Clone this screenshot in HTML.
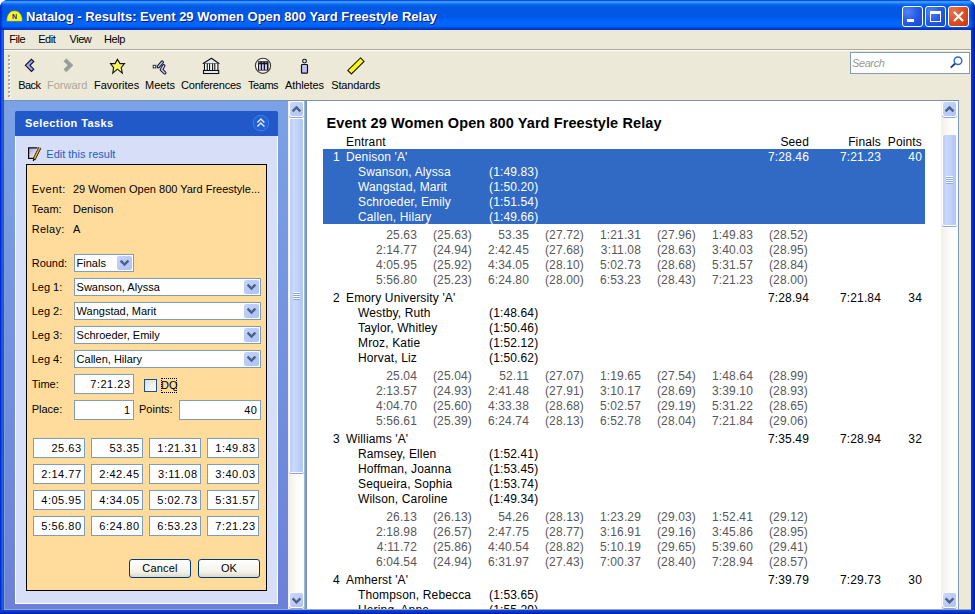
<!DOCTYPE html>
<html>
<head>
<meta charset="utf-8">
<title>Natalog - Results: Event 29 Women Open 800 Yard Freestyle Relay</title>
<style>
html,body{margin:0;padding:0;}
body{width:975px;height:614px;overflow:hidden;background:#fff;font-family:"Liberation Sans",sans-serif;font-size:11px;color:#000;position:relative;}
*{box-sizing:border-box;}
.abs{position:absolute;}
#win{position:absolute;left:0;top:0;width:975px;height:614px;background:linear-gradient(to right,#0019cf 0,#0831d9 1px,#166aee 2px,#0855dd 4px,#0855dd 5px,#0831d9 6px,#0831d9 970px,#0a3fde 971px,#0831d9 972px,#001ea0 975px);border-radius:8px 8px 0 0;overflow:hidden;}
#title{position:absolute;left:0;top:0;width:975px;height:30px;
background:linear-gradient(to bottom,#0543dc 0px,#0a50e4 0.6px,#3a93ff 1.2px,#3d96ff 2.4px,#1c80fb 3.4px,#0a6cf0 4.4px,#035ce4 6px,#0058e3 8px,#0058e6 17px,#0061f6 20px,#0068fd 23px,#0064f9 26px,#0058ea 27.2px,#0040cc 28.2px,#0036c0 29px,#0036c0 30px);}
#title .txt{position:absolute;left:26px;top:9px;font-weight:bold;font-size:13px;color:#fff;white-space:nowrap;text-shadow:1px 1px 0 #0a1883;}
#client{position:absolute;left:4px;top:30px;width:967px;height:580px;background:#ece9d8;border-bottom:1px solid #9aa6b4;}
#bb{position:absolute;left:0;top:610px;width:975px;height:4px;background:linear-gradient(to bottom,#0a48e2 0%,#0838d6 40%,#0428bc 75%,#001c9c 100%);}
.wb{position:absolute;top:6px;width:21px;height:21px;border:1px solid #fff;border-radius:3px;background:radial-gradient(circle at 25% 25%,#5286f6 0%,#2a5ee8 45%,#2152dc 70%,#1a44cc 100%);}
.wb.close{background:radial-gradient(circle at 25% 25%,#ea7450 0%,#de4e24 50%,#c4360c 100%);}
#menubar{position:absolute;left:0;top:0;width:967px;height:19px;}
#menubar span{position:absolute;top:3px;letter-spacing:-0.45px;font-size:11px;line-height:13px;white-space:nowrap;}
#toolbar{position:absolute;left:0;top:19px;width:967px;height:51px;border-top:1px solid #aca899;box-shadow:inset 0 1px 0 #fff;}
.tb{position:absolute;top:29px;font-size:11px;line-height:13px;white-space:nowrap;}
.ti{position:absolute;}
#search{position:absolute;left:846px;top:2px;width:120px;height:22px;background:#fff;border:1px solid #7f9db9;}
#search span{position:absolute;left:1px;top:4px;font-style:italic;color:#9a9a8a;font-size:11px;letter-spacing:-0.4px;}
/* left pane */
#left{position:absolute;left:0;top:70px;width:284px;height:509px;background:linear-gradient(to bottom,#7ba2e7 0%,#6b80da 100%);border-left:1px solid #8a9cc0;box-shadow:inset 0 1px 0 #8fa3c8;}
#lhead{position:absolute;left:10px;top:11px;width:263px;height:25px;background:#2259c8;border-radius:2px 2px 0 0;}
#lhead .t{position:absolute;left:10px;top:6px;color:#fff;font-weight:bold;font-size:11px;line-height:13px;letter-spacing:0.42px;white-space:nowrap;}
#lbody{position:absolute;left:10px;top:36px;width:263px;height:468px;background:#d6dff7;border:1px solid #fff;border-top:none;}
#obox{position:absolute;left:21px;top:64px;width:241px;height:427px;background:#ffdc9c;border:1px solid #000;}
.lb{position:absolute;font-size:11px;line-height:13px;white-space:nowrap;}
.inp{position:absolute;background:#fff;border:1px solid #7f9db9;font-size:11px;line-height:13px;white-space:nowrap;overflow:hidden;}
.inp span{position:absolute;top:3px;}
.inp .r{right:2.5px;letter-spacing:0.5px;}
.inp .l{left:1.6px;top:2px;}
.dd{position:absolute;right:1px;top:1px;width:15px;bottom:1px;border-radius:2px;background:linear-gradient(135deg,#c6d4fb 0%,#b7c9f8 55%,#aec2f6 100%);}
.btn{position:absolute;height:19px;border:1px solid #003c74;border-radius:3px;background:linear-gradient(to bottom,#ffffff 0%,#f3f2ea 70%,#dcd8c8 100%);font-size:11px;line-height:13px;text-align:center;padding-top:2px;}
/* scrollbars */
.sb{position:absolute;width:17px;background:linear-gradient(to right,#f1efe7 0%,#fdfdfb 60%,#fefefc 100%);}
.sbtn{position:absolute;left:1px;width:15px;height:16px;border:1px solid #fff;border-radius:3px;background:linear-gradient(135deg,#cbd8fb 0%,#b9caf7 60%,#aec3f5 100%);box-shadow:0 1px 0 #8aa6e0;}
.sbtn svg{position:absolute;left:0;top:0;}
.thumb{position:absolute;left:1px;width:15px;border:1px solid #fff;border-left-width:1px;border-radius:2px;background:linear-gradient(to right,#b9cbf7 0%,#c9d8fb 25%,#c3d3fa 55%,#b2c9f8 85%,#b7c8f4 100%);box-shadow:0 1px 0 #8aa6e0;}
.grip{position:absolute;left:3px;width:7px;height:8px;background:repeating-linear-gradient(to bottom,#fff 0,#fff 1px,#8aa8ee 1px,#8aa8ee 2px);}
/* right pane */
#right{position:absolute;left:303px;top:70px;width:634px;height:509px;background:#fff;overflow:hidden;border-top:1px solid #7f9db9;}
#rtitle{position:absolute;left:19.5px;top:14px;font-weight:bold;font-size:14.5px;letter-spacing:0.1px;white-space:nowrap;}
.row{position:absolute;left:0;height:15px;font-size:12px;line-height:15px;white-space:nowrap;letter-spacing:0.14px;}
.row span{position:absolute;top:0;}
.g{color:#585858;}
.sel{position:absolute;left:16px;width:602px;background:#316ac5;}
.w{color:#fff;}
</style>
</head>
<body>
<div id="win">
 <div id="title">
  <svg class="abs" style="left:6px;top:10px" width="17" height="12" viewBox="0 0 17 12"><path d="M1 11 C1 4 4.5 1 8.5 1 C12.5 1 16 4 16 11 Z" fill="#ffff00" stroke="#d8c020" stroke-width="0.6"/><text x="8.5" y="9" font-family="Liberation Sans, sans-serif" font-size="7" font-weight="bold" fill="#1010e0" text-anchor="middle">N</text></svg>
  <div class="abs" style="left:0;top:0;width:3px;height:30px;background:linear-gradient(to right,rgba(0,20,170,.75),rgba(0,20,170,0))"></div><div class="abs" style="right:0;top:0;width:5px;height:30px;background:linear-gradient(to left,rgba(0,20,150,.8),rgba(0,20,150,0))"></div>
  <div class="txt">Natalog - Results: Event 29 Women Open 800 Yard Freestyle Relay</div>
  <div class="wb" style="left:902px"><div class="abs" style="left:4px;top:12px;width:7px;height:3px;background:#fff"></div></div>
  <div class="wb" style="left:925px"><div class="abs" style="left:4px;top:4px;width:11px;height:11px;border:1px solid #fff;border-top-width:3px"></div></div>
  <div class="wb close" style="left:948px"><svg class="abs" style="left:0;top:0" width="19" height="19" viewBox="0 0 19 19"><path d="M5 5 L14 14 M14 5 L5 14" stroke="#fff" stroke-width="2.2" fill="none"/></svg></div>
 </div>
 <div id="bb"></div>
 <div id="client">
  <div id="menubar">
   <span style="left:5.2px">File</span><span style="left:34.2px">Edit</span><span style="left:65.5px">View</span><span style="left:100px">Help</span>
  </div>
  <div id="toolbar">
   
<div class="abs" style="left:5px;top:6px;width:2px;height:42px;background:repeating-linear-gradient(to bottom,#fff 0,#fff 2px,transparent 2px,transparent 4px)"></div><div class="abs" style="left:4px;top:5px;width:2px;height:42px;background:repeating-linear-gradient(to bottom,#aeab98 0,#aeab98 2px,transparent 2px,transparent 4px)"></div>
<svg class="ti" style="left:20px;top:8px" width="12" height="15" viewBox="0 0 12 15"><path transform="translate(5.5 7.3) scale(0.94) translate(-5.5 -7.3)" d="M1 7.3 L7.6 0.9 L10.1 3.2 L6 7.3 L10.1 11.4 L7.6 13.8 Z" fill="#a0a0ec" stroke="#101018" stroke-width="1.1" stroke-linejoin="miter"/></svg>
<svg class="ti" style="left:58px;top:8px" width="12" height="15" viewBox="0 0 12 15"><path d="M11 7.3 L4.4 0.9 L1.9 3.2 L6 7.3 L1.9 11.4 L4.4 13.8 Z" fill="#9a9a9a" stroke="#a4a4a0" stroke-width="0.8" stroke-linejoin="miter"/></svg>
<svg class="ti" style="left:104px;top:8px" width="19" height="18" viewBox="0 0 19 18"><path transform="translate(9.4 8.3) scale(0.93) translate(-9.4 -8.3)" d="M9.4 0.9 L12.2 5.4 L17 5.4 L13.5 9.7 L14.7 15.7 L9.4 11.4 L4.4 15.7 L5.3 9.7 L2 5.4 L6.9 5.4 Z" fill="#f8f860" stroke="#14140a" stroke-width="1.2" stroke-linejoin="miter"/></svg>
<svg class="ti" style="left:148px;top:10px" width="16" height="15" viewBox="0 0 16 15"><rect x="1.2" y="5.3" width="2.6" height="2.6" fill="#fff" stroke="#2a2a44" stroke-width="1"/><path d="M6.4 6.6 L10.2 2.2" stroke="#1a1a30" stroke-width="3.5" stroke-linecap="round" fill="none"/><path d="M6.4 6.6 L10.2 2.2" stroke="#c4c4f4" stroke-width="1.4" stroke-linecap="round" fill="none"/><path d="M11.6 5.8 L9.5 9.8 L12.7 12.7" stroke="#1a1a30" stroke-width="3.5" stroke-linecap="round" stroke-linejoin="round" fill="none"/><path d="M11.6 5.8 L9.5 9.8 L12.7 12.7" stroke="#c8c8f6" stroke-width="1.5" stroke-linecap="round" stroke-linejoin="round" fill="none"/></svg>
<svg class="ti" style="left:198px;top:7px" width="19" height="18" viewBox="0 0 19 18"><path d="M9.4 1.2 L17 6.5 L1.2 6.5 Z" fill="#e8e8f4" stroke="#101010" stroke-width="1.1" stroke-linejoin="round"/><rect x="2.2" y="6.5" width="14" height="7" fill="#fafafa" stroke="none"/><path d="M2.5 6.5 V13.5 M5.3 6.5 V13.5 M7.6 6.5 V13.5 M10.6 6.5 V13.5 M12.8 6.5 V13.5 M15.9 6.5 V13.5" stroke="#101010" stroke-width="1.1"/><rect x="1.5" y="13.5" width="15.2" height="3" fill="#f0f0f8" stroke="#101010" stroke-width="1.1"/></svg>
<svg class="ti" style="left:250px;top:7px" width="18" height="18" viewBox="0 0 18 18"><circle cx="9" cy="8.8" r="7.6" fill="#f6f4ec" stroke="#3c3838" stroke-width="1.1"/><rect x="4" y="4.2" width="10.5" height="9.4" fill="#18181c"/><path d="M4.6 5.3 H14" stroke="#8c8ca0" stroke-width="1" stroke-dasharray="1.6 1.6"/><rect x="5" y="7.3" width="1.8" height="5.5" fill="#c8c8f8"/><rect x="8" y="7.3" width="1.8" height="5.5" fill="#c8c8f8"/><rect x="11" y="7.3" width="2" height="5.5" fill="#c8c8f8"/></svg>
<svg class="ti" style="left:296px;top:8px" width="9" height="16" viewBox="0 0 9 16"><circle cx="4.5" cy="3.1" r="1.9" fill="#e4e4fa" stroke="#101010" stroke-width="1.1"/><rect x="1.5" y="6.5" width="6" height="8.7" rx="0.8" fill="#c0c0f0" stroke="#101010" stroke-width="1.2"/></svg>
<svg class="ti" style="left:343px;top:7px" width="18" height="18" viewBox="0 0 18 18"><path d="M13.5 0.9 L17 4.4 L4.4 16.9 L0.8 13.4 Z" fill="#ffff10" stroke="#181808" stroke-width="1.1" stroke-linejoin="miter"/><path d="M5 11.5 L13 3.6" stroke="#b8a830" stroke-width="0.7" stroke-dasharray="1 1.4"/></svg>
<div class="tb" style="left:14.2px;letter-spacing:-0.55px">Back</div>
<div class="tb" style="left:43px;color:#aca899">Forward</div>
<div class="tb" style="left:90px">Favorites</div>
<div class="tb" style="left:141px">Meets</div>
<div class="tb" style="left:177px;letter-spacing:-0.2px">Conferences</div>
<div class="tb" style="left:244px;letter-spacing:-0.45px">Teams</div>
<div class="tb" style="left:281px;letter-spacing:-0.1px">Athletes</div>
<div class="tb" style="left:327.2px;letter-spacing:-0.12px">Standards</div>

   <div id="search"><span>Search</span>
    <svg class="abs" style="left:97px;top:2px" width="16" height="16" viewBox="0 0 16 16"><path d="M7.4 8.3 L2.8 12.6" stroke="#1c3c88" stroke-width="1.9" stroke-linecap="butt"/><circle cx="10" cy="5.7" r="3.8" fill="#fff" stroke="#2f6fc4" stroke-width="1.5"/></svg>
   </div>
  </div>
  <div id="left">
   <div id="lhead"><div class="t">Selection Tasks</div>
    <svg class="abs" style="right:9px;top:4px" width="17" height="17" viewBox="0 0 17 17"><circle cx="8.9" cy="8.1" r="7.8" fill="#2560d2" stroke="#3a80f2" stroke-width="1"/><path d="M5.4 7.6 L8.9 4.1 L12.4 7.6 M5.4 11.6 L8.9 8.1 L12.4 11.6" stroke="#e4ecff" stroke-width="1.4" fill="none"/></svg>
   </div>
   <div id="lbody"></div>
   <div id="obox"></div>
<svg class="abs" style="left:23px;top:46px" width="15" height="16" viewBox="0 0 15 16"><defs><linearGradient id="pg" x1="0" y1="0" x2="0.7" y2="1"><stop offset="0" stop-color="#a4a4d4"/><stop offset="1" stop-color="#f4f4fc"/></linearGradient></defs><path d="M0.6 1.9 H9 L6 12.4 H0.6 Z" fill="url(#pg)"/><path d="M9.4 1.9 H0.6 V12.4 H6" fill="none" stroke="#0a0a0a" stroke-width="1.2"/><path d="M11.9 1.6 L5.9 13.6" stroke="#141008" stroke-width="3.2"/><path d="M11.6 2.2 L6.4 12.6" stroke="#e8d828" stroke-width="1.5"/><path d="M11.3 2.8 L6.8 11.8" stroke="#e03050" stroke-width="0.9" stroke-dasharray="1.2 1.2"/><path d="M12.2 1 L11.5 2.4" stroke="#f0a0b0" stroke-width="1.6"/><path d="M6.2 13 L5.2 15" stroke="#141008" stroke-width="1.4"/></svg>
<div class="lb" style="left:41.3px;top:48px;color:#215dc6">Edit this result</div>
<div class="lb" style="left:26.7px;top:83px;letter-spacing:0.5px">Event:</div>
<div class="lb" style="left:68px;top:83px;">29 Women Open 800 Yard Freestyle...</div>
<div class="lb" style="left:26.7px;top:103px;">Team:</div>
<div class="lb" style="left:68px;top:103px;">Denison</div>
<div class="lb" style="left:26.7px;top:123px;letter-spacing:0.3px">Relay:</div>
<div class="lb" style="left:68px;top:123px;">A</div>
<div class="lb" style="left:26.7px;top:157px;">Round:</div>
<div class="inp" style="left:69px;top:154px;width:60px;height:18px"><span class="l">Finals</span><div class="dd"><svg width="15" height="14" viewBox="0 0 15 14" style="position:absolute;left:0;top:0"><path d="M3.6 4.6 L7.5 8.5 L11.4 4.6" stroke="#4d6185" stroke-width="2.4" fill="none"/></svg></div></div>
<div class="lb" style="left:26.7px;top:181px;">Leg 1:</div>
<div class="inp" style="left:69px;top:178px;width:187px;height:18px"><span class="l">Swanson, Alyssa</span><div class="dd"><svg width="15" height="14" viewBox="0 0 15 14" style="position:absolute;left:0;top:0"><path d="M3.6 4.6 L7.5 8.5 L11.4 4.6" stroke="#4d6185" stroke-width="2.4" fill="none"/></svg></div></div>
<div class="lb" style="left:26.7px;top:205px;">Leg 2:</div>
<div class="inp" style="left:69px;top:202px;width:187px;height:18px"><span class="l">Wangstad, Marit</span><div class="dd"><svg width="15" height="14" viewBox="0 0 15 14" style="position:absolute;left:0;top:0"><path d="M3.6 4.6 L7.5 8.5 L11.4 4.6" stroke="#4d6185" stroke-width="2.4" fill="none"/></svg></div></div>
<div class="lb" style="left:26.7px;top:229px;">Leg 3:</div>
<div class="inp" style="left:69px;top:226px;width:187px;height:18px"><span class="l">Schroeder, Emily</span><div class="dd"><svg width="15" height="14" viewBox="0 0 15 14" style="position:absolute;left:0;top:0"><path d="M3.6 4.6 L7.5 8.5 L11.4 4.6" stroke="#4d6185" stroke-width="2.4" fill="none"/></svg></div></div>
<div class="lb" style="left:26.7px;top:253px;">Leg 4:</div>
<div class="inp" style="left:69px;top:250px;width:187px;height:18px"><span class="l">Callen, Hilary</span><div class="dd"><svg width="15" height="14" viewBox="0 0 15 14" style="position:absolute;left:0;top:0"><path d="M3.6 4.6 L7.5 8.5 L11.4 4.6" stroke="#4d6185" stroke-width="2.4" fill="none"/></svg></div></div>
<div class="lb" style="left:26.7px;top:278px;">Time:</div>
<div class="inp" style="left:69px;top:274px;width:60px;height:20px"><span class="r">7:21.23</span></div>
<div class="abs" style="left:139px;top:279px;width:13px;height:13px;border:1px solid #1c5180;background:linear-gradient(135deg,#dcdcd7 0%,#ffffff 100%)"></div>
<div class="abs" style="left:155.5px;top:278px;width:16px;height:15px;border:1px dotted #000"></div>
<div class="lb" style="left:156px;top:279px;">DQ</div>
<div class="lb" style="left:26.7px;top:303px;">Place:</div>
<div class="inp" style="left:69px;top:300px;width:60px;height:20px"><span class="r">1</span></div>
<div class="lb" style="left:134px;top:303px;">Points:</div>
<div class="inp" style="left:174px;top:300px;width:82px;height:20px"><span class="r">40</span></div>
<div class="inp" style="left:28px;top:338px;width:52px;height:20px"><span class="r">25.63</span></div>
<div class="inp" style="left:86px;top:338px;width:52px;height:20px"><span class="r">53.35</span></div>
<div class="inp" style="left:144px;top:338px;width:52px;height:20px"><span class="r">1:21.31</span></div>
<div class="inp" style="left:202px;top:338px;width:52px;height:20px"><span class="r">1:49.83</span></div>
<div class="inp" style="left:28px;top:364px;width:52px;height:20px"><span class="r">2:14.77</span></div>
<div class="inp" style="left:86px;top:364px;width:52px;height:20px"><span class="r">2:42.45</span></div>
<div class="inp" style="left:144px;top:364px;width:52px;height:20px"><span class="r">3:11.08</span></div>
<div class="inp" style="left:202px;top:364px;width:52px;height:20px"><span class="r">3:40.03</span></div>
<div class="inp" style="left:28px;top:390px;width:52px;height:20px"><span class="r">4:05.95</span></div>
<div class="inp" style="left:86px;top:390px;width:52px;height:20px"><span class="r">4:34.05</span></div>
<div class="inp" style="left:144px;top:390px;width:52px;height:20px"><span class="r">5:02.73</span></div>
<div class="inp" style="left:202px;top:390px;width:52px;height:20px"><span class="r">5:31.57</span></div>
<div class="inp" style="left:28px;top:416px;width:52px;height:20px"><span class="r">5:56.80</span></div>
<div class="inp" style="left:86px;top:416px;width:52px;height:20px"><span class="r">6:24.80</span></div>
<div class="inp" style="left:144px;top:416px;width:52px;height:20px"><span class="r">6:53.23</span></div>
<div class="inp" style="left:202px;top:416px;width:52px;height:20px"><span class="r">7:21.23</span></div>
<div class="btn" style="left:124px;top:459px;width:62px;letter-spacing:0.2px">Cancel</div>
<div class="btn" style="left:193px;top:459px;width:62px">OK</div>
  </div>
  <!-- left scrollbar -->
  <div class="sb" style="left:284px;top:70px;height:509px;width:16px">
   <div class="sbtn" style="top:1px"><svg width="13" height="14" viewBox="0 0 13 14"><path d="M2.6 9.4 L6.5 5.5 L10.4 9.4" stroke="#4d6185" stroke-width="2.4" fill="none"/></svg></div>
   <div class="thumb" style="top:18px;height:355px"><div class="grip" style="top:173px"></div></div>
   <div class="sbtn" style="top:492px"><svg width="13" height="14" viewBox="0 0 13 14"><path d="M2.6 5.4 L6.5 9.3 L10.4 5.4" stroke="#4d6185" stroke-width="2.4" fill="none"/></svg></div>
  </div>
  <div class="abs" style="left:300px;top:70px;width:3px;height:509px;background:linear-gradient(to right,#b4c6dc 0px,#7c9ec2 1.5px,#6c90b4 3px)"></div>
  <div id="right">
   <div id="rtitle">Event 29 Women Open 800 Yard Freestyle Relay</div>
   <div class="sel" style="top:48px;height:75px"></div>
   <div class="row" style="top:34px;width:634px"><span class="" style="left:39px">Entrant</span><span class="" style="right:132px">Seed</span><span class="" style="right:60px">Finals</span><span class="" style="right:19px">Points</span></div>
<div class="row" style="top:49px;width:634px"><span class="w" style="left:26px">1</span><span class="w" style="left:39px">Denison 'A'</span><span class="w" style="right:132px">7:28.46</span><span class="w" style="right:60px">7:21.23</span><span class="w" style="right:19px">40</span></div>
<div class="row" style="top:64px;width:634px"><span class="w" style="left:51px">Swanson, Alyssa</span><span class="w" style="left:182px">(1:49.83)</span></div>
<div class="row" style="top:79px;width:634px"><span class="w" style="left:51px">Wangstad, Marit</span><span class="w" style="left:182px">(1:50.20)</span></div>
<div class="row" style="top:94px;width:634px"><span class="w" style="left:51px">Schroeder, Emily</span><span class="w" style="left:182px">(1:51.54)</span></div>
<div class="row" style="top:109px;width:634px"><span class="w" style="left:51px">Callen, Hilary</span><span class="w" style="left:182px">(1:49.66)</span></div>
<div class="row" style="top:127px;width:634px"><span class="g" style="right:524px">25.63</span><span class="g" style="right:469px">(25.63)</span><span class="g" style="right:412px">53.35</span><span class="g" style="right:357px">(27.72)</span><span class="g" style="right:300px">1:21.31</span><span class="g" style="right:245px">(27.96)</span><span class="g" style="right:188px">1:49.83</span><span class="g" style="right:133px">(28.52)</span></div>
<div class="row" style="top:142px;width:634px"><span class="g" style="right:524px">2:14.77</span><span class="g" style="right:469px">(24.94)</span><span class="g" style="right:412px">2:42.45</span><span class="g" style="right:357px">(27.68)</span><span class="g" style="right:300px">3:11.08</span><span class="g" style="right:245px">(28.63)</span><span class="g" style="right:188px">3:40.03</span><span class="g" style="right:133px">(28.95)</span></div>
<div class="row" style="top:157px;width:634px"><span class="g" style="right:524px">4:05.95</span><span class="g" style="right:469px">(25.92)</span><span class="g" style="right:412px">4:34.05</span><span class="g" style="right:357px">(28.10)</span><span class="g" style="right:300px">5:02.73</span><span class="g" style="right:245px">(28.68)</span><span class="g" style="right:188px">5:31.57</span><span class="g" style="right:133px">(28.84)</span></div>
<div class="row" style="top:172px;width:634px"><span class="g" style="right:524px">5:56.80</span><span class="g" style="right:469px">(25.23)</span><span class="g" style="right:412px">6:24.80</span><span class="g" style="right:357px">(28.00)</span><span class="g" style="right:300px">6:53.23</span><span class="g" style="right:245px">(28.43)</span><span class="g" style="right:188px">7:21.23</span><span class="g" style="right:133px">(28.00)</span></div>
<div class="row" style="top:190px;width:634px"><span class="" style="left:26px">2</span><span class="" style="left:39px">Emory University 'A'</span><span class="" style="right:132px">7:28.94</span><span class="" style="right:60px">7:21.84</span><span class="" style="right:19px">34</span></div>
<div class="row" style="top:205px;width:634px"><span class="" style="left:51px">Westby, Ruth</span><span class="" style="left:182px">(1:48.64)</span></div>
<div class="row" style="top:220px;width:634px"><span class="" style="left:51px">Taylor, Whitley</span><span class="" style="left:182px">(1:50.46)</span></div>
<div class="row" style="top:235px;width:634px"><span class="" style="left:51px">Mroz, Katie</span><span class="" style="left:182px">(1:52.12)</span></div>
<div class="row" style="top:250px;width:634px"><span class="" style="left:51px">Horvat, Liz</span><span class="" style="left:182px">(1:50.62)</span></div>
<div class="row" style="top:268px;width:634px"><span class="g" style="right:524px">25.04</span><span class="g" style="right:469px">(25.04)</span><span class="g" style="right:412px">52.11</span><span class="g" style="right:357px">(27.07)</span><span class="g" style="right:300px">1:19.65</span><span class="g" style="right:245px">(27.54)</span><span class="g" style="right:188px">1:48.64</span><span class="g" style="right:133px">(28.99)</span></div>
<div class="row" style="top:283px;width:634px"><span class="g" style="right:524px">2:13.57</span><span class="g" style="right:469px">(24.93)</span><span class="g" style="right:412px">2:41.48</span><span class="g" style="right:357px">(27.91)</span><span class="g" style="right:300px">3:10.17</span><span class="g" style="right:245px">(28.69)</span><span class="g" style="right:188px">3:39.10</span><span class="g" style="right:133px">(28.93)</span></div>
<div class="row" style="top:298px;width:634px"><span class="g" style="right:524px">4:04.70</span><span class="g" style="right:469px">(25.60)</span><span class="g" style="right:412px">4:33.38</span><span class="g" style="right:357px">(28.68)</span><span class="g" style="right:300px">5:02.57</span><span class="g" style="right:245px">(29.19)</span><span class="g" style="right:188px">5:31.22</span><span class="g" style="right:133px">(28.65)</span></div>
<div class="row" style="top:313px;width:634px"><span class="g" style="right:524px">5:56.61</span><span class="g" style="right:469px">(25.39)</span><span class="g" style="right:412px">6:24.74</span><span class="g" style="right:357px">(28.13)</span><span class="g" style="right:300px">6:52.78</span><span class="g" style="right:245px">(28.04)</span><span class="g" style="right:188px">7:21.84</span><span class="g" style="right:133px">(29.06)</span></div>
<div class="row" style="top:331px;width:634px"><span class="" style="left:26px">3</span><span class="" style="left:39px">Williams 'A'</span><span class="" style="right:132px">7:35.49</span><span class="" style="right:60px">7:28.94</span><span class="" style="right:19px">32</span></div>
<div class="row" style="top:346px;width:634px"><span class="" style="left:51px">Ramsey, Ellen</span><span class="" style="left:182px">(1:52.41)</span></div>
<div class="row" style="top:361px;width:634px"><span class="" style="left:51px">Hoffman, Joanna</span><span class="" style="left:182px">(1:53.45)</span></div>
<div class="row" style="top:376px;width:634px"><span class="" style="left:51px">Sequeira, Sophia</span><span class="" style="left:182px">(1:53.74)</span></div>
<div class="row" style="top:391px;width:634px"><span class="" style="left:51px">Wilson, Caroline</span><span class="" style="left:182px">(1:49.34)</span></div>
<div class="row" style="top:409px;width:634px"><span class="g" style="right:524px">26.13</span><span class="g" style="right:469px">(26.13)</span><span class="g" style="right:412px">54.26</span><span class="g" style="right:357px">(28.13)</span><span class="g" style="right:300px">1:23.29</span><span class="g" style="right:245px">(29.03)</span><span class="g" style="right:188px">1:52.41</span><span class="g" style="right:133px">(29.12)</span></div>
<div class="row" style="top:424px;width:634px"><span class="g" style="right:524px">2:18.98</span><span class="g" style="right:469px">(26.57)</span><span class="g" style="right:412px">2:47.75</span><span class="g" style="right:357px">(28.77)</span><span class="g" style="right:300px">3:16.91</span><span class="g" style="right:245px">(29.16)</span><span class="g" style="right:188px">3:45.86</span><span class="g" style="right:133px">(28.95)</span></div>
<div class="row" style="top:439px;width:634px"><span class="g" style="right:524px">4:11.72</span><span class="g" style="right:469px">(25.86)</span><span class="g" style="right:412px">4:40.54</span><span class="g" style="right:357px">(28.82)</span><span class="g" style="right:300px">5:10.19</span><span class="g" style="right:245px">(29.65)</span><span class="g" style="right:188px">5:39.60</span><span class="g" style="right:133px">(29.41)</span></div>
<div class="row" style="top:454px;width:634px"><span class="g" style="right:524px">6:04.54</span><span class="g" style="right:469px">(24.94)</span><span class="g" style="right:412px">6:31.97</span><span class="g" style="right:357px">(27.43)</span><span class="g" style="right:300px">7:00.37</span><span class="g" style="right:245px">(28.40)</span><span class="g" style="right:188px">7:28.94</span><span class="g" style="right:133px">(28.57)</span></div>
<div class="row" style="top:472px;width:634px"><span class="" style="left:26px">4</span><span class="" style="left:39px">Amherst 'A'</span><span class="" style="right:132px">7:39.79</span><span class="" style="right:60px">7:29.73</span><span class="" style="right:19px">30</span></div>
<div class="row" style="top:487px;width:634px"><span class="" style="left:51px">Thompson, Rebecca</span><span class="" style="left:182px">(1:53.65)</span></div>
<div class="row" style="top:502px;width:634px"><span class="" style="left:51px">Hering, Anne</span><span class="" style="left:182px">(1:55.29)</span></div>
  </div>
  <!-- right scrollbar -->
  <div class="sb" style="left:937px;top:70px;height:509px;border-top:1px solid #7f9db9">
   <div class="sbtn" style="left:1px;top:0px"><svg width="13" height="14" viewBox="0 0 13 14"><path d="M2.6 9.4 L6.5 5.5 L10.4 9.4" stroke="#4d6185" stroke-width="2.4" fill="none"/></svg></div>
   <div class="thumb" style="left:1px;top:33px;height:92px"><div class="grip" style="top:41px"></div></div>
   <div class="sbtn" style="left:1px;top:491px"><svg width="13" height="14" viewBox="0 0 13 14"><path d="M2.6 5.4 L6.5 9.3 L10.4 5.4" stroke="#4d6185" stroke-width="2.4" fill="none"/></svg></div>
  </div>
  <div class="abs" style="left:954px;top:70px;width:1px;height:509px;background:#7f9db9"></div>
  <div class="abs" style="left:0;top:70px;width:955px;height:1px;background:#7494bc"></div>
 </div>
</div>
</body>
</html>
